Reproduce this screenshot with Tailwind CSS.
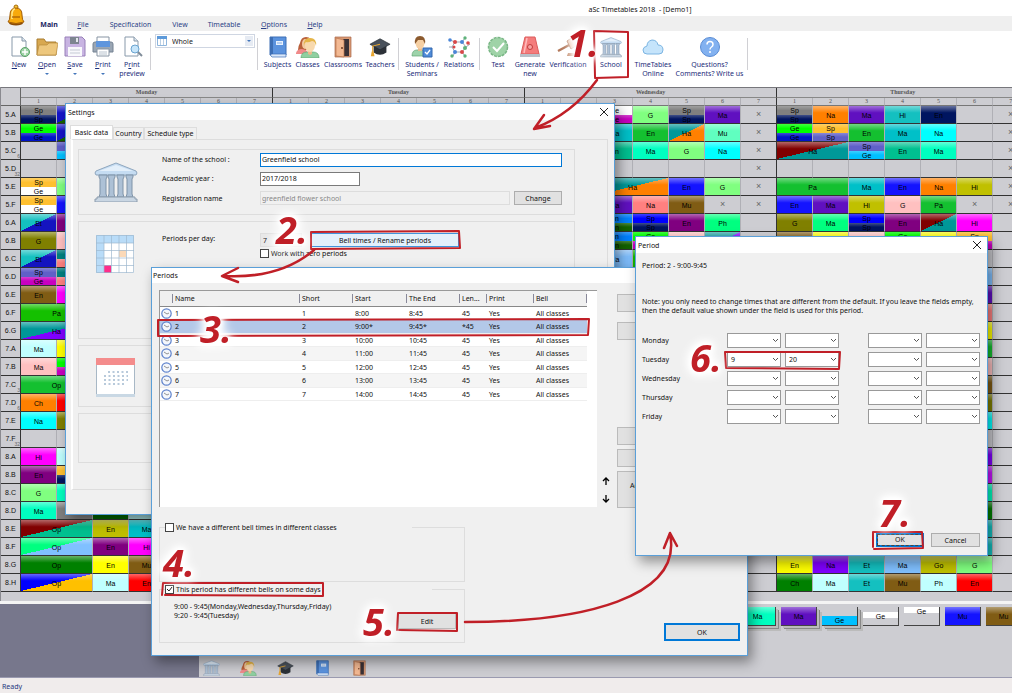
<!DOCTYPE html>
<html lang="en">
<head>
    <meta charset="UTF-8">
    <meta name="viewport" content="width=device-width, initial-scale=1.0">
    <title>aSc Timetables 2018 - [Demo1]</title>
    <script src="https://cdn.jsdelivr.net/npm/@tailwindcss/browser@4"></script>
</head>
<body class="relative min-h-screen overflow-hidden bg-white font-['Noto_Sans','Open_Sans',sans-serif] text-[7px] leading-[9px] text-[#111]">

    <!-- Shared icons -->
    <svg class="hidden">
        <symbol id="i-school" viewBox="0 0 44 40">
            <path d="M22 1 42 9q2 2 0 4H2q-2-2 0-4Z" fill="#c5dcf2" stroke="#8fa6bd"/>
            <path d="M5 9h34L22 3Z" fill="#e3effa"/>
            <path d="M5 13h8v2l-1 2v15l1 3H5l1-3V17l-1-2ZM14 13h7v2l-1 2v15l1 3h-7l1-3V17l-1-2ZM23 13h7v2l-1 2v15l1 3h-7l1-3V17l-1-2ZM32 13h7v2l-1 2v15l1 3h-7l1-3V17l-1-2Z" fill="#adc1d6" stroke="#7f93a8"/>
            <path d="M3 35h38v2h2v3H1v-3h2Z" fill="#c9d6e3" stroke="#8c9cad"/>
        </symbol>
        <symbol id="i-book" viewBox="0 0 20 22">
            <path d="M2 1h16v18H2Z" fill="#5b93de" stroke="#3d6fb5"/>
            <path d="M2 1h3v18H2Z" fill="#3d6fb5"/>
            <path d="M3 18h15v3H4q-2-1-1-3Z" fill="#dbe9fa" stroke="#3d6fb5" stroke-width=".7"/>
            <path d="M8 5h7v4H8Z" fill="#e8f2fd"/><path d="M9 7h5" stroke="#5b93de" stroke-width=".7"/>
        </symbol>
        <symbol id="i-classes" viewBox="0 0 24 22">
            <path d="M2 14q0-4 2-7 1-6 6-6 6 0 6 7v6Z" fill="#b9603a"/>
            <path d="M0 17q1-4 6-4l4 1 3 4H0Z" fill="#f08a8a"/>
            <ellipse cx="9" cy="8" rx="3" ry="5" fill="#f3c9a0"/>
            <path d="M5 22q0-6 6-6h6q6 0 6 6Z" fill="#8fcfa0" stroke="#5fa673" stroke-width=".7"/>
            <path d="M12 14h4v4l-2 1-2-1Z" fill="#eab98c"/>
            <ellipse cx="14" cy="9" rx="5" ry="7" fill="#f8d9ae"/>
            <path d="M8 10q-1-8 6-8t6 8q-1-5-4-5-4 2-6 1-2 1-2 4Z" fill="#e5b548"/>
        </symbol>
        <symbol id="i-door" viewBox="0 0 20 22">
            <path d="M2 1h16v20H2Z" fill="#d99a74" stroke="#a9694a" stroke-width=".7"/><path d="M10 3h6v17h-6Z" fill="#3a3136"/>
            <path d="M3 2l8 2v17l-8-1Z" fill="#f3b993" stroke="#b9754f" stroke-width=".7"/>
            <circle cx="9" cy="12" r="1" fill="#6d3a20"/>
        </symbol>
        <symbol id="i-cap" viewBox="0 0 24 22">
            <path d="M5 10v7q7 5 14 0v-7Z" fill="#2c3138"/>
            <path d="M12 2 23 8 12 14 1 8Z" fill="#49515b" stroke="#23282e" stroke-width=".7"/>
            <path d="M12 8 4 10v7" fill="none" stroke="#e6a530" stroke-width="1.2"/><path d="M3 16h2l1 5H2Z" fill="#e6a530"/>
        </symbol>
    </svg>

    <div class="flex min-h-screen flex-col">
        <!-- Title bar -->
        <header class="relative">
            <h1 class="h-4 pt-[5px] pl-[268px] text-center font-normal">aSc Timetables 2018 &nbsp;- [Demo1]</h1>
            <svg class="absolute top-1 left-1.5 h-[22px] w-[19px]" viewBox="0 0 19 22">
                <circle cx="10" cy="3" r="2" fill="#f6c83c" stroke="#a86a08"/>
                <ellipse cx="10" cy="19" rx="7" ry="2.6" fill="#8a4b06"/>
                <path d="M2 18q2-2 2-7 0-7 6-7t6 7q0 5 2 7-8 3-16 0Z" fill="#f7a90c" stroke="#a25d05"/>
                <path d="M6 15V9q1-4 3-4" fill="none" stroke="#ffe98a" stroke-width="1.5"/>
                <path d="M6 13h8" stroke="#a25d05" stroke-width="1.2"/>
            </svg>
            <nav class="flex h-[15px] items-center bg-[#efefef] pl-[31px] text-[#2a3f86] *:pt-0.5">
                <a href="#" class="flex h-full w-9 items-center justify-center bg-white font-bold text-[#17255f]">Main</a>
                <a href="#" class="w-8 text-center"><u>F</u>ile</a>
                <a href="#" class="w-[63px] text-center">Specification</a>
                <a href="#" class="w-9 text-center">View</a>
                <a href="#" class="w-[52px] text-center">Timetable</a>
                <a href="#" class="w-12 text-center"><u>O</u>ptions</a>
                <a href="#" class="w-[34px] text-center"><u>H</u>elp</a>
            </nav>
        </header>

        <!-- Ribbon -->
        <div class="flex h-14 items-start pt-[3px] pl-[5px] text-[#1c2d7a]">
            <button class="flex w-7 flex-col items-center pt-0.5">
                <svg class="mb-0.5 h-[22px] w-[22px]" viewBox="0 0 22 22"><path d="M4 1h10l4 4v15H4Z" fill="#fff" stroke="#8899aa"/><path d="M14 1v4h4" fill="#dde6ee" stroke="#8899aa"/><circle cx="17" cy="16" r="4.5" fill="#9ed3a6" stroke="#5aa068"/><path d="M17 13v6M14 16h6" stroke="#fff" stroke-width="1.5"/></svg>
                <span><u>N</u>ew</span>
            </button>
            <button class="flex w-7 flex-col items-center pt-0.5">
                <svg class="mb-0.5 h-[22px] w-[22px]" viewBox="0 0 22 22"><path d="M1 19V3h7l2 3h10v13Z" fill="#d8a850" stroke="#a87c30"/><path d="m1 19 2-10h8l2-2h9l-2 12Z" fill="#edc77d" stroke="#b98d3e" stroke-width=".7"/></svg>
                <span><u>O</u>pen</span><i class="mt-1 border-x-2 border-t-2 border-x-transparent border-t-[#4477bb]"></i>
            </button>
            <button class="flex w-7 flex-col items-center pt-0.5">
                <svg class="mb-0.5 h-[22px] w-[22px]" viewBox="0 0 22 22"><path d="M1 1h17l3 3v16H1Z" fill="#c8b4e2" stroke="#9880b8"/><path d="M6 1h9v7H6Z" fill="#7d8590"/><path d="M12 2h2v4h-2Z" fill="#e4e8ec"/><path d="M4 11h14v9H4Z" fill="#f8f8fc"/><path d="M6 14h10M6 17h10" stroke="#c5cad4"/></svg>
                <span><u>S</u>ave</span><i class="mt-1 border-x-2 border-t-2 border-x-transparent border-t-[#4477bb]"></i>
            </button>
            <button class="flex w-7 flex-col items-center pt-0.5">
                <svg class="mb-0.5 h-[22px] w-[22px]" viewBox="0 0 22 22"><path d="M5 1h12v7H5Z" fill="#fff" stroke="#8794a3"/><path d="M1 8q0-2 2-2h16q2 0 2 2v8H1Z" fill="#9aa6b4" stroke="#748292"/><path d="M4 5h14v6H4Z" fill="#5e95dd"/><path d="M5 13h12v7H5Z" fill="#fff" stroke="#8794a3"/><path d="M7 16h8M7 18h8" stroke="#b8c3ce"/></svg>
                <span><u>P</u>rint</span><i class="mt-1 border-x-2 border-t-2 border-x-transparent border-t-[#4477bb]"></i>
            </button>
            <button class="flex w-[30px] flex-col items-center pt-0.5">
                <svg class="mb-0.5 h-[22px] w-[22px]" viewBox="0 0 22 22"><path d="M4 1h9l4 4v15H4Z" fill="#fff" stroke="#8899aa"/><path d="M13 1v4h4" fill="#dde6ee" stroke="#8899aa"/><circle cx="14" cy="13" r="4" fill="#c6e5fa" stroke="#6aa3cf"/><path d="m17 16 4 4" stroke="#7f8c99" stroke-width="2"/></svg>
                <span>P<u>r</u>int<br>preview</span>
            </button>
            <i class="mr-1 ml-[3px] mt-1 h-8 w-px bg-[#d0d0d4]"></i>
            <div class="relative mr-0.5 w-[100px]">
                <svg class="absolute top-0.5 left-0.5 h-2.5 w-2.5" viewBox="0 0 10 10"><path d="M.5.5h9v9h-9Z" fill="#fff" stroke="#8fb6dd"/><path d="M0 0h10v3H0Z" fill="#5d9ada"/><path d="M3.500 3v6M6.500 3v6" stroke="#b9cfe4"/></svg>
                <select aria-label="View" class="h-3.5 w-full appearance-none border border-[#cfd6e2] pl-4 text-[#222]"><option>Whole</option></select>
                <span class="pointer-events-none absolute inset-y-0.5 right-0.5 flex w-2 items-center justify-center bg-[#e6ebf3]"><i class="border-x-2 border-t-2 border-x-transparent border-t-[#4477bb]"></i></span>
            </div>
            <i class="mr-1 mt-1 h-8 w-px bg-[#d0d0d4]"></i>
            <button class="flex w-[31px] flex-col items-center pt-0.5"><svg class="mb-0.5 h-[22px] w-[22px]"><use href="#i-book"/></svg>Subjects</button>
            <button class="flex w-[29px] flex-col items-center pt-0.5"><svg class="mb-0.5 h-[22px] w-6"><use href="#i-classes"/></svg>Classes</button>
            <button class="flex w-[42px] flex-col items-center pt-0.5"><svg class="mb-0.5 h-[22px] w-[22px]"><use href="#i-door"/></svg>Classrooms</button>
            <button class="flex w-8 flex-col items-center pt-0.5"><svg class="mb-0.5 h-[22px] w-[22px]"><use href="#i-cap"/></svg>Teachers</button>
            <i class="mx-0.5 mt-1 h-8 w-px bg-[#d0d0d4]"></i>
            <button class="flex w-[42px] flex-col items-center pt-0.5">
                <svg class="mb-0.5 h-[22px] w-[22px]" viewBox="0 0 22 22"><path d="M1 20q0-6 5-6h6q5 0 5 6Z" fill="#9dd3aa" stroke="#61a474" stroke-width=".7"/><path d="M7 11h4v4H7Z" fill="#e9b98e"/><ellipse cx="9" cy="7" rx="4.500" ry="6" fill="#f6d0a4"/><path d="M4 8q-1-8 5-8t5 8l-2-4H7Z" fill="#8c5a2e"/><path d="M12 12h9v9h-9Z" fill="#4f8bd8" stroke="#3569ae"/><path d="m14 16 2 2 3-4" fill="none" stroke="#fff" stroke-width="1.3"/></svg>
                <span>Students /<br>Seminars</span>
            </button>
            <button class="flex w-8 flex-col items-center pt-0.5">
                <svg class="mb-0.5 h-[22px] w-[22px]" viewBox="0 0 22 22"><path d="M7 6h7l4 5-4 5H7l-3-5ZM7 6 2 4M14 6l3-4M18 11l4-3M14 16l3 4M7 16l-2 4M4 11H1" fill="none" stroke="#9aa7b5"/><g fill="#d94848"><circle cx="7" cy="6" r="2"/><circle cx="20" cy="7" r="1.800"/><circle cx="14" cy="16" r="2"/><circle cx="6" cy="11" r="1.500"/></g><g fill="#4a86d8"><circle cx="14" cy="6" r="2"/><circle cx="7" cy="16" r="2"/><circle cx="2" cy="4" r="1.800"/></g><g fill="#5fb27a"><circle cx="17" cy="2" r="1.700"/><circle cx="17" cy="12" r="2"/><circle cx="17" cy="20" r="1.700"/><circle cx="4" cy="20" r="1.700"/></g></svg>
                Relations
            </button>
            <i class="mr-1 ml-1 mt-1 h-8 w-px bg-[#d0d0d4]"></i>
            <button class="flex w-7 flex-col items-center pt-0.5">
                <svg class="mb-0.5 h-[22px] w-[22px]" viewBox="0 0 22 22"><circle cx="11" cy="11" r="9.500" fill="#9fd3a7" stroke="#79b685" stroke-width="1.500" stroke-dasharray="3 1"/><path d="m6 11 4 4 7-8" fill="none" stroke="#fff" stroke-width="2"/></svg>
                Test
            </button>
            <button class="flex w-9 flex-col items-center pt-0.5">
                <svg class="mb-0.5 h-[22px] w-[22px]" viewBox="0 0 22 22"><path d="M6 1h10l4 17H2Z" fill="#f47c7c" stroke="#dc5c5c"/><path d="M1 18h20v3H1Z" fill="#b8c0c8"/><path d="M8 2 5 17" stroke="#fbb" stroke-width="1.500"/><circle cx="11" cy="11" r="2.500" fill="#f7a0a0" stroke="#c03c3c"/></svg>
                <span>Generate<br>new</span>
            </button>
            <button class="flex w-10 flex-col items-center pt-0.5">
                <svg class="mb-0.5 h-[22px] w-[22px]" viewBox="0 0 22 22"><path d="M1 15 14 8" stroke="#b3785a" stroke-width="2.500"/><path d="m10 5 6-4 4 8-6 4Z" fill="#e6b493" stroke="#a66a48"/><path d="M11 17h9l1 3H10Z" fill="#c08463"/></svg>
                Verification
            </button>
            <button class="flex w-[46px] flex-col items-center pt-0.5"><svg class="mb-0.5 h-[22px] w-[22px]"><use href="#i-school"/></svg>School</button>
            <button class="flex w-[38px] flex-col items-center pt-0.5">
                <svg class="mb-0.5 h-[22px] w-[22px]" viewBox="0 0 22 22"><path d="M5 18q-4 0-4-4 0-3 4-4 0-5 5-6 5 0 6 5 5 0 5 5 0 4-4 4Z" fill="#c5e4fb" stroke="#7cb5e2"/></svg>
                <span>TimeTables<br>Online</span>
            </button>
            <button class="flex w-[75px] flex-col items-center pt-0.5">
                <svg class="mb-0.5 h-[22px] w-[22px]" viewBox="0 0 22 22"><circle cx="11" cy="11" r="9.500" fill="#82b1f0" stroke="#5a8cd4"/><path d="M8 8.500q0-3 3-3t3 3q0 1.500-1.500 2.500t-1.500 2.500M11 15v2" fill="none" stroke="#fff" stroke-width="1.500"/></svg>
                <span>Questions?<br>Comments? Write us</span>
            </button>
            <i class="mt-1 h-8 w-px bg-[#d0d0d4]"></i>
        </div>

        <!-- Timetable -->
        <main class="overflow-hidden border-l border-[#8a8a90] bg-[#cdcdd2] pb-[9px]">
            <table class="w-[1028px] table-fixed border-separate border-spacing-0 border-t border-[#77777c] font-['Liberation_Sans',Arial,sans-serif] text-[7px]">
                <colgroup id="cols"><col class="w-5"></colgroup>
                <thead id="head" class="font-['Liberation_Serif',serif] text-[6px] leading-[7px] text-[#555]"></thead>
                <tbody id="grid"></tbody>
            </table>
        </main>

        <!-- Card panel -->
        <section class="flex grow border-t-[3px] border-[#f4f4f4]">
            <div class="w-[199px] shrink-0 bg-[#77778c]"></div>
            <div class="flex min-w-0 grow flex-col justify-between bg-[#cdcdd2] pt-[3px]">
                <div id="cards" class="flex gap-[5px] overflow-hidden pb-1.5 pl-[541px] font-['Liberation_Sans',Arial,sans-serif] text-[7px]"></div>
                <div class="flex gap-5 pb-px pl-1">
                    <svg class="h-4 w-[17px]"><use href="#i-school"/></svg>
                    <svg class="h-4 w-[17px]"><use href="#i-classes"/></svg>
                    <svg class="h-4 w-[17px]"><use href="#i-cap"/></svg>
                    <svg class="h-4 w-[17px]"><use href="#i-book"/></svg>
                    <svg class="h-4 w-[17px]"><use href="#i-door"/></svg>
                </div>
            </div>
        </section>
        <footer class="h-4 border-t border-[#9a9ab0] bg-[#f0ecec] pt-1 pl-0.5 text-[#26377f]">Ready</footer>
    </div>

    <!-- Settings dialog -->
    <div role="dialog" aria-label="Settings" class="absolute top-[103px] left-[65px] flex h-[412px] w-[550px] flex-col border border-[#5a9fd8] bg-[#f0f0f0] shadow-[4px_6px_12px_rgba(0,0,0,0.4)]">
        <div class="flex h-4 items-center justify-between bg-white pr-1.5 pl-0.5">
            <span>Settings</span>
            <button aria-label="Close"><svg class="h-2 w-2" viewBox="0 0 8 8"><path d="m0 0 8 8M8 0 0 8" stroke="#222"/></svg></button>
        </div>
        <div class="flex items-end pt-[5px] pl-1">
            <button class="h-3.5 w-[43px] border border-b-0 border-[#ddd] bg-white">Basic data</button>
            <button class="h-3 w-[31px] border border-b-0 border-[#ddd]">Country</button>
            <button class="h-3 w-[53px] border border-b-0 border-[#ddd]">Schedule type</button>
        </div>
        <div class="mr-1.5 ml-[5px] flex h-[351px] flex-col gap-1.5 border border-l-2 border-[#ddd] border-l-white pt-[9px] pl-[5px]">
            <div class="flex h-[66px] w-[497px] border border-[#ddd]">
                <svg class="mt-3 ml-[15px] h-10 w-11"><use href="#i-school"/></svg>
                <div class="ml-[24px] grid h-[58px] grid-cols-[98px_1fr] items-center">
                    <label for="school">Name of the school :</label>
                    <input id="school" value="Greenfield school" class="h-3.5 w-[302px] border border-[#0078d7] bg-white pl-px">
                    <label for="year">Academic year :</label>
                    <input id="year" value="2017/2018" class="h-3.5 w-[100px] border border-[#7a7a7a] bg-white pl-px">
                    <label for="reg">Registration name</label>
                    <div class="flex gap-1">
                        <input id="reg" value="greenfield flower school" disabled class="h-3.5 w-[250px] border border-[#ddd] pl-px text-[#888]">
                        <button class="h-3.5 w-12 border border-[#adadad] bg-[#e1e1e1]">Change</button>
                    </div>
                </div>
            </div>
            <div class="flex h-[118px] w-[497px] items-start border border-[#ddd]">
                <svg class="mt-[13px] ml-[17px] h-[38px] w-[38px]" viewBox="0 0 38 38"><path d="M0 0h38v38H0Z" fill="#fff"/><path d="M0 0h38v8H8v30H0Z" fill="#b9dcf8"/><path d="M23 15h7v7h-7Z" fill="#fbd9b8"/><path d="M8 30h7v8H8Z" fill="#ff2d8a"/><path d="M.5.5h37v37H.5ZM8 0v38M15.500 0v38M23 0v38M30.500 0v38M0 8h38M0 15.500h38M0 23h38M0 30.500h38" fill="none" stroke="#9db8cf" stroke-width=".7"/></svg>
                <label for="ppd" class="mt-3 ml-7 w-[98px]">Periods per day:</label>
                <div class="mt-[11px]">
                    <div class="flex gap-[9px]">
                        <input id="ppd" value="7" disabled class="h-3.5 w-[42px] border border-[#ddd] bg-[#e8e8e8] pl-0.5">
                        <button class="h-3.5 w-[148px] border border-[#3f94dc] bg-[#e3f0fb]">Bell times / Rename periods</button>
                    </div>
                    <label class="mt-0.5 flex items-center gap-0.5"><input type="checkbox" class="h-[9px] w-[9px] appearance-none border border-[#444] bg-white">Work with zero periods</label>
                </div>
            </div>
            <div class="h-[62px] w-[497px] border border-[#ddd]">
                <svg class="mt-3 ml-[17px] h-10 w-[39px]" viewBox="0 0 39 40"><path d="M.5.500h38v38H.5Z" fill="#fff" stroke="#a8b8c6"/><path d="M0 0h39v7H0Z" fill="#f48c8c"/><path d="M0 36h39v3H0Z" fill="#c9d8e4"/><path d="M12 14h20M8 18h24M8 22h24M8 26h20" stroke="#b8cadb" stroke-width="2" stroke-dasharray="2 2.500"/></svg>
            </div>
            <div class="h-[50px] w-[497px] border border-[#ddd]"></div>
        </div>
    </div>

    <!-- Periods dialog -->
    <div role="dialog" aria-label="Periods" class="absolute top-[267px] left-[151px] h-[389px] w-[597px] border border-[#5a9fd8] bg-[#f0f0f0] shadow-[4px_6px_12px_rgba(0,0,0,0.4)]">
        <div class="flex h-[15px] items-center bg-white pl-px">Periods</div>
        <div class="flex gap-[5px] pt-[7px] pl-[7px]">
            <div class="h-[217px] w-[438px] border-t border-l border-[#999] bg-white">
                <table class="w-[427px] table-fixed border-separate border-spacing-0 text-left">
                    <thead>
                        <tr class="h-4 *:border-b *:border-[#888] *:bg-[#f0f0f0] *:p-0 *:font-normal">
                            <th class="w-3"></th>
                            <th class="w-[127px]"><span class="block border-l border-[#889] pl-0.5">Name</span></th>
                            <th class="w-[53px]"><span class="block border-l border-[#889] pl-0.5">Short</span></th>
                            <th class="w-[54px]"><span class="block border-l border-[#889] pl-0.5">Start</span></th>
                            <th class="w-[53px]"><span class="block border-l border-[#889] pl-0.5">The End</span></th>
                            <th class="w-[27px]"><span class="block border-l border-[#889] pl-0.5">Len...</span></th>
                            <th class="w-[47px]"><span class="block border-l border-[#889] pl-0.5">Print</span></th>
                            <th><span class="block border-x border-[#889] pl-0.5">Bell</span></th>
                        </tr>
                    </thead>
                    <tbody id="periods"></tbody>
                </table>
            </div>
            <div class="flex h-[217px] flex-col justify-end gap-2.5 pb-1">
                <button aria-label="Move up"><svg class="h-2 w-2" viewBox="0 0 8 8"><path d="M4 8V1M1 4l3-3 3 3" fill="none" stroke="#000" stroke-width="1.300"/></svg></button>
                <button aria-label="Move down"><svg class="h-2 w-2" viewBox="0 0 8 8"><path d="M4 0v7M1 4l3 3 3-3" fill="none" stroke="#000" stroke-width="1.300"/></svg></button>
            </div>
            <div class="flex w-[124px] flex-col gap-1 pt-1 pl-0.5">
                <button aria-label="New" class="h-[18px] border border-[#bbb] bg-[#e1e1e1]"></button>
                <button aria-label="Change" class="mt-1.5 mb-[83px] h-[18px] border border-[#bbb] bg-[#e1e1e1]"></button>
                <button aria-label="Delete" class="h-[18px] border border-[#bbb] bg-[#e1e1e1]"></button>
                <button aria-label="Bells" class="h-[18px] border border-[#bbb] bg-[#e1e1e1]"></button>
                <button class="h-[37px] border border-[#bbb] bg-[#e1e1e1] pb-2 pl-3 text-left">Add break</button>
            </div>
        </div>
        <div class="flex justify-between pt-[15px] pr-[7px] pl-[7px]">
            <div class="w-[306px]">
                <fieldset class="mb-[3px] h-[59px] border border-[#ddd]">
                    <legend class="ml-[5px] w-[247px]"><label class="flex items-center gap-0.5"><input type="checkbox" class="h-[9px] w-[9px] appearance-none border border-[#444] bg-white">We have a different bell times in different classes</label></legend>
                </fieldset>
                <fieldset class="h-[58px] border border-[#ddd]">
                    <legend class="ml-[5px] w-[267px]"><label class="flex items-center gap-0.5"><input type="checkbox" checked class="h-[9px] w-[9px] appearance-none border border-[#444] bg-white"><svg class="-ml-[10px] mr-px h-[7px] w-[7px]" viewBox="0 0 7 7"><path d="m1 3 2 2 3-4" fill="none" stroke="#222"/></svg>This period has different bells on some days</label></legend>
                    <p class="mt-2 ml-3.5">9:00 - 9:45(Monday,Wednesday,Thursday,Friday)<br>9:20 - 9:45(Tuesday)</p>
                    <button class="-mt-[7px] mr-2 ml-auto block h-4 w-[58px] border border-[#bbb] bg-[#e1e1e1]">Edit</button>
                </fieldset>
            </div>
            <button class="mb-0.5 h-[18px] w-[76px] self-end border-2 border-[#0078d7] bg-[#e1e1e1]">OK</button>
        </div>
    </div>

    <!-- Period dialog -->
    <div role="dialog" aria-label="Period" class="absolute top-[236px] left-[635px] flex h-80 w-[353px] flex-col border border-[#5a9fd8] bg-[#f0f0f0] shadow-[4px_6px_12px_rgba(0,0,0,0.4)]">
        <div class="flex h-4 items-center justify-between bg-white pr-1.5 pl-0.5">
            <span>Period</span>
            <button aria-label="Close"><svg class="h-2 w-2" viewBox="0 0 8 8"><path d="m0 0 8 8M8 0 0 8" stroke="#222"/></svg></button>
        </div>
        <div class="flex grow flex-col px-1.5 pt-2 pb-2">
            <p>Period: 2 - 9:00-9:45</p>
            <p class="mt-[27px]">Note: you only need to change times that are different from the default. If you leave the fields empty,<br>then the default value shown under the field is used for this period.</p>
            <div id="days" class="mt-[18px] flex flex-col gap-1"></div>
            <div class="mt-auto flex items-center justify-end gap-[7px] pr-px">
                <button class="h-3.5 w-12 border-2 border-[#0078d7] bg-[#e1e1e1] leading-[8px] outline-1 -outline-offset-2 outline-dashed outline-[#444]">OK</button>
                <button class="h-3.5 w-[49px] border border-[#adadad] bg-[#e1e1e1]">Cancel</button>
            </div>
        </div>
    </div>

    <!-- Tutorial marks -->
    <svg class="pointer-events-none absolute top-0 left-0 h-[693px] w-[1012px]" viewBox="0 0 1012 693">
        <g fill="none" stroke="#c01f27" stroke-width="2" stroke-linecap="round" stroke-linejoin="round">
            <path d="M595 77 594 31l34 1v45l-33 1"/>
            <path d="M597 80q-25 34-62 48M544 115l-10 14 16-3" stroke-width="2.500"/>
            <path d="M311 248V232l148-1 1 17-149 1"/>
            <path d="M314 250q-34 29-90 26M238 268l-16 8 16 6" stroke-width="2.500"/>
            <path d="M158 335V320l431-1-1 16-430 1"/>
            <path d="m162 595 1-12 160 0v13l-158-1"/>
            <path d="M397 630 398 613h59v18l-58-1"/>
            <path d="M465 622c120 0 218-25 205-88M664 548l6-15 7 13" stroke-width="2.500"/>
            <path d="M726 368 725 352l115 0-1 17-113-1"/>
            <path d="M873 547V532h49l1 16-49 1"/>
        </g>
        <g class="fill-[#c01f27] font-['Open_Sans',sans-serif] text-[38px] font-bold italic [filter:drop-shadow(0_0_2px_white)_drop-shadow(0_0_2px_white)_drop-shadow(0_0_4px_white)_drop-shadow(0_0_4px_white)]">
            <text x="567" y="57">1.</text>
            <text x="276" y="244">2.</text>
            <text x="200" y="343">3.</text>
            <text x="163" y="577">4.</text>
            <text x="363" y="636">5.</text>
            <text x="690" y="372">6.</text>
            <text x="879" y="527">7.</text>
        </g>
    </svg>

    <script>
        // [column, span, text, colour]               plain card
        // [column, span, text, colour, text, colour] two groups, one over the other
        // [column, span, text, colour, null, colour] card with two class colours
        const X = c => [c, 1, '×', null];
        const rows = [
            ['5.A', '', [0,1,'Sp','#808080','Sp','#001560'], [1,1,'','#1414c8',null,'#146400'], [16,1,'Ge','#ffffff','Ge','#c800c0'], [17,1,'G','#80ff80'], [18,1,'Sp','#808080','Sp','#001560'], [19,1,'Ma','#6010c0'], X(20), [21,1,'Sp','#808080','Sp','#001560'], [22,1,'Na','#ff8000'], [23,1,'Ma','#6010c0'], [24,1,'Hi','#14c0c0'], [25,1,'En','#001560'], X(27)],
            ['5.B', '', [0,1,'Ge','#00ff00','Ge','#0014c8'], [1,1,'','#1414c8',null,'#146400'], [16,1,'Ma','#00c0c8'], [17,1,'En','#14c030'], [18,1,'Ha','#009898',null,'#ff8000'], [19,1,'Mu','#60ffc0'], X(20), [21,1,'Ge','#00ff00','Ge','#0014c8'], [22,1,'Sp','#ffc030','Sp','#6060c8'], [23,1,'En','#14c030'], [24,1,'Ma','#00c0c8'], [25,1,'Na','#00ffff'], X(27)],
            ['5.C', '6', [1,1,'','#6060c8','','#00c0ff'], [16,1,'En','#00c090'], [17,1,'Ma','#00ffc0'], [18,1,'G','#80ff80'], [19,1,'Na','#00ffff'], X(20), [21,2,'Ha','#800000',null,'#009898'], [23,1,'Sp','#6060c8','Ge','#00c0ff'], [24,1,'En','#00c090'], [25,1,'Ma','#00ffc0'], X(27)],
            ['5.D', '32', X(20), X(27)],
            ['5.E', '', [0,1,'Sp','#ffc030','Ge','#ffffff'], [1,1,'','#80ff80'], [16,2,'Ha','#009898',null,'#ff8000'], [18,1,'En','#1414ff'], [19,1,'G','#80ff80'], X(20), [21,2,'Pa','#14c030'], [23,1,'Ma','#00c0c8'], [24,1,'En','#1414ff'], [25,1,'Na','#ff8000'], [26,1,'Hi','#c0c000'], X(27)],
            ['5.F', '', [0,1,'Sp','#ffc030','Ge','#ffffff'], [1,1,'','#1414ff'], [16,1,'Ma','#6010c0'], [17,1,'Na','#ff8080'], [18,1,'Mu','#805c14'], X(19), X(20), [21,1,'En','#1414ff'], [22,1,'Ma','#6010c0'], [23,1,'Hi','#c0c000'], [24,1,'G','#ffc0c0'], [25,1,'Pa','#14c030'], X(26), X(27)],
            ['6.A', '', [0,1,'Et','#14c0c0',null,'#1414c0'], [1,1,'','#800080'], [16,1,'En','#0080ff','En','#146400'], [17,1,'Sp','#0000ff','Sp','#001560'], [18,1,'En','#800080'], [19,1,'Ph','#00ff80'], [21,1,'G','#808000'], [22,1,'Ma','#00ff80'], [23,1,'Sp','#0000ff','Sp','#001560'], [24,1,'En','#800080'], [25,1,'Ha','#800000',null,'#009898'], [26,1,'Hi','#ff00ff']],
            ['6.B', '', [0,1,'G','#808000'], [1,1,'','#ffc0c0'], [16,1,'En','#0080ff','En','#146400'], [17,1,'Ge','#00ff00','Ge','#c800c0'], [18,1,'','#ffc0c0'], [19,1,'','#14a0a0',null,'#8000ff'], [21,1,'','#805c14'], [22,1,'','#ffff00'], [23,1,'','#ffc0c0'], [24,1,'Ge','#00ff00','Ge','#c800c0'], [25,1,'','#ffff00'], [26,1,'Sp','#ffc030','Ge','#c800c0']],
            ['6.C', '', [0,1,'Et','#14c0c0',null,'#1414c0'], [1,1,'','#008080','','#ff8080'], [16,1,'Ma','#80c0ff'], [17,1,'','#14c000']],
            ['6.D', '', [0,1,'Sp','#6060c8','Ge','#c800c0'], [1,1,'','#008080','','#ff8080'], [26,1,'','#80c0ff']],
            ['6.E', '', [0,1,'En','#805c14'], [1,1,'','#ff00ff'], [26,1,'','#6010c0']],
            ['6.F', '', [0,2,'Pa','#14c000'], [26,1,'','#ff8080']],
            ['6.G', '', [0,2,'Ha','#009898',null,'#8000ff'], [26,1,'','#ffff00']],
            ['7.A', '', [0,1,'Ma','#c0ffff'], [1,1,'','#ffff00'], [26,1,'','#14c030']],
            ['7.B', '', [0,1,'Ma','#ffc0c0'], [1,1,'','#00ff00','','#c800c0'], [26,1,'','#ffc0c0']],
            ['7.C', '3', [0,2,'Op','#14c030'], [26,1,'','#805c14']],
            ['7.D', '6', [0,1,'Ch','#ff8000'], [1,1,'','#ff0000'], [26,1,'','#808000']],
            ['7.E', '', [0,1,'Na','#00ffff'], [1,1,'','#808000'], [26,1,'','#00ffff']],
            ['7.F', '32'],
            ['8.A', '', [0,1,'Hi','#ff00ff'], [1,1,'','#c0ffff'], [26,1,'','#8000ff']],
            ['8.B', '', [0,1,'En','#800080'], [1,1,'','#ffc030','','#001560'], [26,1,'','#c814ff']],
            ['8.C', '', [0,1,'G','#80ff80'], [1,1,'','#00ffc0'], [26,1,'','#00ffc0']],
            ['8.D', '', [0,1,'Ma','#00ffc0'], [1,1,'','#808080'], [2,1,'','#006400'], [3,1,'','#a0d8d8'], [26,1,'','#008000']],
            ['8.E', '', [0,2,'Op','#800000',null,'#00c090'], [2,1,'En','#c0c000'], [3,1,'Ma','#00c0c8'], [26,1,'','#14c0c0']],
            ['8.F', '', [0,2,'Op','#00ff80',null,'#80c0ff'], [2,1,'En','#800080'], [3,1,'Hi','#ff00ff'], [26,1,'','#14c0c0']],
            ['8.G', '', [0,2,'Op','#008000'], [2,1,'En','#ffff00'], [3,1,'Mu','#805c14'], [21,1,'En','#ffff00'], [22,1,'Na','#8000ff'], [23,1,'Et','#14c0c0'], [24,1,'Ma','#80c0ff'], [25,1,'Go','#c0c000'], [26,1,'G','#80ff80']],
            ['8.H', '', [0,2,'Op','#0000ff',null,'#ffc000'], [2,1,'Ma','#c0ffff'], [3,1,'En','#ff0000'], [21,1,'Ch','#008000'], [22,1,'Ma','#c0ffff'], [23,1,'Et','#14c0c0'], [24,1,'Mu','#805c14'], [25,1,'Ph','#c0ffff'], [26,1,'En','#ff0000']],
        ];

        const half = (text, colour) => `<div class="h-1/2 bg-linear-to-b from-white/25 to-transparent to-50% text-center leading-[9px]" style="background-color:${colour}">${text}</div>`;

        function card([, , text, c1, text2, c2]) {
            if (!c1) return `<div class="text-center text-[9px] text-[#666]">${text}</div>`;
            if (c2 && text2 !== null) return `<div class="h-[17px] overflow-hidden text-black">${half(text, c1)}${half(text2, c2)}</div>`;
            const bg = c2 ? `linear-gradient(to bottom right, ${c1} 50%, ${c2} 50%)` : c1;
            return `<div class="h-[17px] text-black" style="background:${bg}"><div class="h-full bg-linear-to-b from-white/40 to-transparent to-40% pt-[5px] text-center">${text}</div></div>`;
        }

        const edge = c => c % 7 === 6 ? 'border-r border-r-[#333]' : 'border-r border-r-[#b0b0b6]';

        let cols = '', nums = '';
        for (let c = 0; c < 28; c++) {
            cols += '<col class="w-9">';
            nums += `<th class="h-2 border-b border-b-[#777] p-0 font-normal ${edge(c)}">${c % 7 + 1}</th>`;
        }
        document.getElementById('cols').innerHTML += cols;
        document.getElementById('head').innerHTML =
            '<tr><th rowspan="2" class="border-r border-b border-[#666] p-0"></th>' +
            ['Monday', 'Tuesday', 'Wednesday', 'Thursday'].map(d => `<th colspan="7" class="h-2.5 border-r border-b border-r-[#333] border-b-[#888] p-0">${d}</th>`).join('') +
            `</tr><tr>${nums}</tr>`;

        document.getElementById('grid').innerHTML = rows.map(([name, note, ...cells]) => {
            let html = '', c = 0;
            while (c < 28) {
                const cell = cells.find(k => k[0] === c);
                const span = cell ? cell[1] : 1;
                html += `<td colspan="${span}" class="h-[18px] border-b border-b-[#333] p-0 align-middle ${edge(c + span - 1)}">${cell ? card(cell) : ''}</td>`;
                c += span;
            }
            return `<tr><th class="relative border-r border-b border-[#333] p-0 font-normal">${name}<span class="absolute right-0 bottom-0 text-[5px] leading-[5px] text-[#666]">${note}</span></th>${html}</tr>`;
        }).join('');

        // Unplaced cards: [text, colour, part of the height, stacked]
        document.getElementById('cards').innerHTML = [
            ['Ma', '#00ffc0', 'full', true], ['Ma', '#6010c0', 'full', true], ['Ge', '#00c0ff', 'low', true],
            ['Ge', '#ffffff', 'mid', false], ['Ge', '#ffffff', 'top', false], ['Mu', '#1414ff', 'full', false], ['Mu', '#805c14', 'full', false],
        ].map(([text, colour, part, stacked]) => {
            const place = { full: 'h-full pt-[5px] bg-linear-to-b from-white/40 to-transparent to-40%', low: 'relative top-[9px] h-[9px]', mid: 'relative top-[5px] h-[6px]', top: 'h-[6px]' }[part];
            const stack = stacked ? 'shadow-[2px_2px_0_#bbb,3px_3px_0_#888,5px_5px_0_#bbb]' : '';
            return `<div class="h-[19px] w-9 shrink-0 border-r border-b border-[#444] bg-[#cdcdd2] text-center text-black ${stack}"><div class="${place}" style="background-color:${colour}">${text}</div></div>`;
        }).join('');

        // Periods list
        document.getElementById('periods').innerHTML = [
            ['8:00', '8:45', '45'], ['9:00*', '9:45*', '*45'], ['10:00', '10:45', '45'], ['11:00', '11:45', '45'],
            ['12:00', '12:45', '45'], ['13:00', '13:45', '45'], ['14:00', '14:45', '45'],
        ].map(([start, end, len], i) => `
            <tr class="h-[13px] even:h-[14px] *:border-b *:border-[#eee] *:p-0 *:pl-[3px] ${i === 1 ? 'bg-[#b3c8e8]' : 'even:bg-[#f5f5f5]'}">
                <td class="pl-px!"><svg class="h-[11px] w-[11px]" viewBox="0 0 11 11"><circle cx="5.500" cy="5.500" r="4.700" fill="#f4f7fc" stroke="#5f83cc" stroke-width="1.200"/><path d="m3 4 3 2 2-1" fill="none" stroke="#777" stroke-width=".8"/></svg></td>
                <td>${i + 1}</td><td>${i + 1}</td><td>${start}</td><td>${end}</td><td>${len}</td><td>Yes</td><td>All classes</td>
            </tr>`).join('');

        // Time fields for each day
        const drop = (label, value) => `
            <span class="relative"><select aria-label="${label}" class="block h-[15px] w-[54px] appearance-none border border-[#999] bg-white pl-[3px]"><option>${value}</option></select>
            <svg class="pointer-events-none absolute top-[5px] right-0.5 h-[5px] w-[7px]" viewBox="0 0 7 5"><path d="m1 1 2.500 2.500L6 1" fill="none" stroke="#555"/></svg></span>`;
        document.getElementById('days').innerHTML = ['Monday', 'Tuesday', 'Wednesday', 'Thursday', 'Friday'].map(d => `
            <div class="flex items-center gap-1">
                <span class="w-[81px]">${d}</span>
                ${drop(d + ' start hour', d === 'Tuesday' ? '9' : '')}${drop(d + ' start minute', d === 'Tuesday' ? '20' : '')}
                <span class="w-[21px]"></span>
                ${drop(d + ' end hour', '')}${drop(d + ' end minute', '')}
            </div>`).join('');
    </script>
</body>
</html>
